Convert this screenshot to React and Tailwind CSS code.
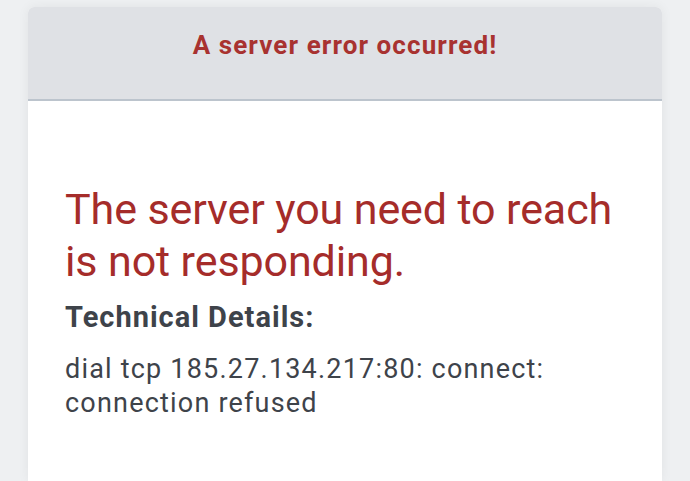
import React from 'react';

const App = () => {
  return (
    <div className="min-h-[481px] bg-[#eef0f2] pt-[7px] px-[28px] font-['Roboto',sans-serif]">
      <div className="bg-white rounded-t-[6px] shadow-[0_0_12px_rgba(0,0,0,0.06)] min-h-[474px] overflow-hidden">
        <div className="h-[94px] bg-[#dfe1e5] border-b-2 border-[#bcc4cd] flex items-center justify-center pb-[16px]">
          <h1 className="text-[26px] font-bold text-[#a83230] tracking-[1.1px]">A server error occurred!</h1>
        </div>
        <div className="pl-[37px] pr-[20px] pt-[82px]">
          <h2 className="text-[43px] leading-[52px] text-[#a52c2a] tracking-[-0.1px]">
            The server you need to reach<br />is not responding.
          </h2>
          <h3 className="mt-[13px] text-[29px] font-bold text-[#3e434a] leading-[34px] tracking-[1px]">Technical Details:</h3>
          <p className="mt-[18px] text-[27px] leading-[34px] text-[#3e434a] tracking-[1.2px]">
            dial tcp 185.27.134.217:80: connect:<br />connection refused
          </p>
        </div>
      </div>
    </div>
  );
};

export default App;
